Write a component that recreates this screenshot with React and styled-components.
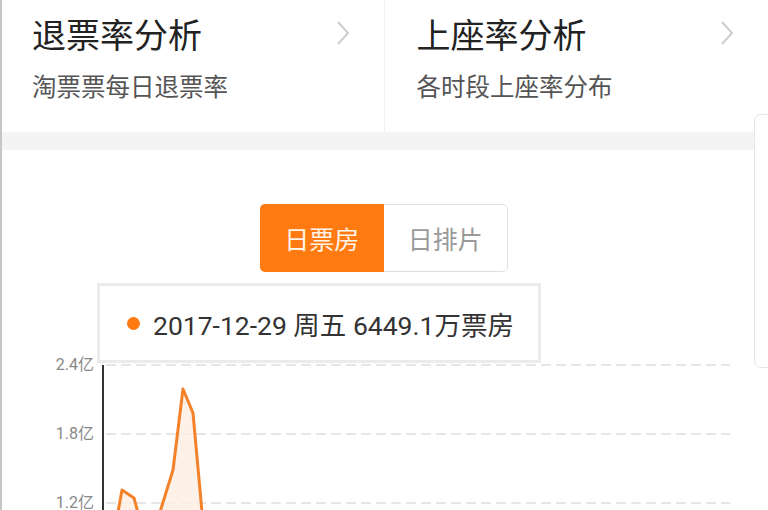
import React from "react";
import styled, { createGlobalStyle } from "styled-components";

const GlobalStyle = createGlobalStyle`
  html, body {
    margin: 0;
    padding: 0;
    background: #ffffff;
    overflow: hidden;
  }
  body {
    font-family: Roboto, "Noto Sans CJK SC", sans-serif;
  }
`;

const Page = styled.div`
  position: relative;
  width: 768px;
  height: 510px;
  overflow: hidden;
  background: #fff;
  border-left: 2px solid #c6c6c6;
  box-sizing: border-box;
`;

const Header = styled.div`
  display: flex;
  height: 132px;
`;

const EntryCard = styled.div`
  flex: 1;
  display: flex;
  justify-content: space-between;
  padding: 12px 34px 0 30px;
  border-left: ${(props) => (props.divider ? "1px solid #f0f0f0" : "none")};
  padding-left: ${(props) => (props.divider ? "32px" : "30px")};
`;

const EntryText = styled.div`
  display: flex;
  flex-direction: column;
`;

const EntryTitle = styled.div`
  font-family: "Noto Sans CJK SC", sans-serif;
  font-size: 34px;
  line-height: 44px;
  color: #222;
`;

const EntrySub = styled.div`
  font-family: "Noto Sans CJK SC", sans-serif;
  font-size: 24.5px;
  line-height: 34px;
  margin-top: 13px;
  color: #555;
`;

const Chevron = styled.svg`
  margin-top: 8px;
  flex-shrink: 0;
`;

const Band = styled.div`
  height: 18px;
  background: #f4f4f4;
`;

const ChartSection = styled.div`
  display: flex;
  flex-direction: column;
  align-items: center;
  padding-top: 54px;
`;

const Toggle = styled.div`
  display: flex;
  width: 248px;
  height: 68px;
  border-radius: 5px;
  overflow: hidden;
  margin-left: -2px;
`;

const ToggleItem = styled.div`
  flex: 1;
  display: flex;
  align-items: center;
  justify-content: center;
  font-family: "Noto Sans CJK SC", sans-serif;
  font-size: 25px;
  box-sizing: border-box;
  background: ${(props) => (props.active ? "#ff7a11" : "#fff")};
  color: ${(props) => (props.active ? "#fff4e8" : "#9a9a9a")};
  border: ${(props) => (props.active ? "none" : "1.5px solid #dedede")};
  border-left: none;
  border-radius: ${(props) => (props.active ? "0" : "0 5px 5px 0")};
`;

const ChartWrap = styled.div`
  position: relative;
  align-self: stretch;
  margin-left: -2px;
  margin-top: 8px;
  height: 300px;
`;

const Tooltip = styled.div`
  position: absolute;
  left: 97px;
  top: 3px;
  width: 444px;
  height: 80px;
  box-sizing: border-box;
  border: 3px solid #ebebeb;
  background: #fff;
  display: flex;
  align-items: center;
  padding-left: 27px;
  gap: 13px;
  font-family: Roboto, "Noto Sans CJK SC", sans-serif;
  font-size: 26.5px;
  color: #333;
  white-space: pre;
`;

const Dot = styled.span`
  width: 13px;
  height: 13px;
  border-radius: 50%;
  background: #ff7a11;
`;

const SidePanel = styled.div`
  position: absolute;
  left: 752px;
  top: 114px;
  width: 40px;
  height: 252px;
  border: 1.5px solid #e6e6e6;
  border-radius: 7px;
  background: #fff;
`;

const points = [
  [112, 545],
  [118, 512],
  [122, 490],
  [134, 498],
  [140, 520],
  [150, 545],
  [160, 512],
  [173, 470],
  [183, 389],
  [193, 413],
  [202, 512],
  [208, 545],
].map(([x, y]) => [x, y - 280]);

const Chart = () => {
  const line = points.map((p) => p.join(",")).join(" ");
  const area = `${line} 208,300 112,300`;
  const grid = [
    { y: 85, label: "2.4亿" },
    { y: 154, label: "1.8亿" },
    { y: 223, label: "1.2亿" },
  ];
  return (
    <svg width="768" height="300" viewBox="0 0 768 300">
      {grid.map((g) => (
        <g key={g.label}>
          <line
            x1="106"
            x2="730"
            y1={g.y}
            y2={g.y}
            stroke="#dedede"
            strokeWidth="1.5"
            strokeDasharray="10 5"
          />
          <text
            x="94"
            y={g.y + 5}
            textAnchor="end"
            fontSize="16"
            fill="#888"
            fontFamily='Roboto, "Noto Sans CJK SC", sans-serif'
          >
            {g.label}
          </text>
        </g>
      ))}
      <line x1="103" x2="103" y1="85" y2="300" stroke="#333" strokeWidth="2" />
      <polygon points={area} fill="#fdeee2" opacity="0.8" />
      <polyline
        points={line}
        fill="none"
        stroke="#f4822a"
        strokeWidth="3"
        strokeLinejoin="round"
      />
    </svg>
  );
};

const ChevronIcon = () => (
  <Chevron width="14" height="26" viewBox="0 0 14 26">
    <polyline
      points="2,2 12,13 2,24"
      fill="none"
      stroke="#cdcdcd"
      strokeWidth="2"
    />
  </Chevron>
);

export default function App() {
  return (
    <>
      <GlobalStyle />
      <Page>
        <Header>
          <EntryCard>
            <EntryText>
              <EntryTitle>退票率分析</EntryTitle>
              <EntrySub>淘票票每日退票率</EntrySub>
            </EntryText>
            <ChevronIcon />
          </EntryCard>
          <EntryCard divider>
            <EntryText>
              <EntryTitle>上座率分析</EntryTitle>
              <EntrySub>各时段上座率分布</EntrySub>
            </EntryText>
            <ChevronIcon />
          </EntryCard>
        </Header>
        <Band />
        <ChartSection>
          <Toggle>
            <ToggleItem active>日票房</ToggleItem>
            <ToggleItem>日排片</ToggleItem>
          </Toggle>
          <ChartWrap>
            <Chart />
            <Tooltip>
              <Dot />
              <span>2017-12-29 周五 6449.1万票房</span>
            </Tooltip>
          </ChartWrap>
        </ChartSection>
        <SidePanel />
      </Page>
    </>
  );
}
